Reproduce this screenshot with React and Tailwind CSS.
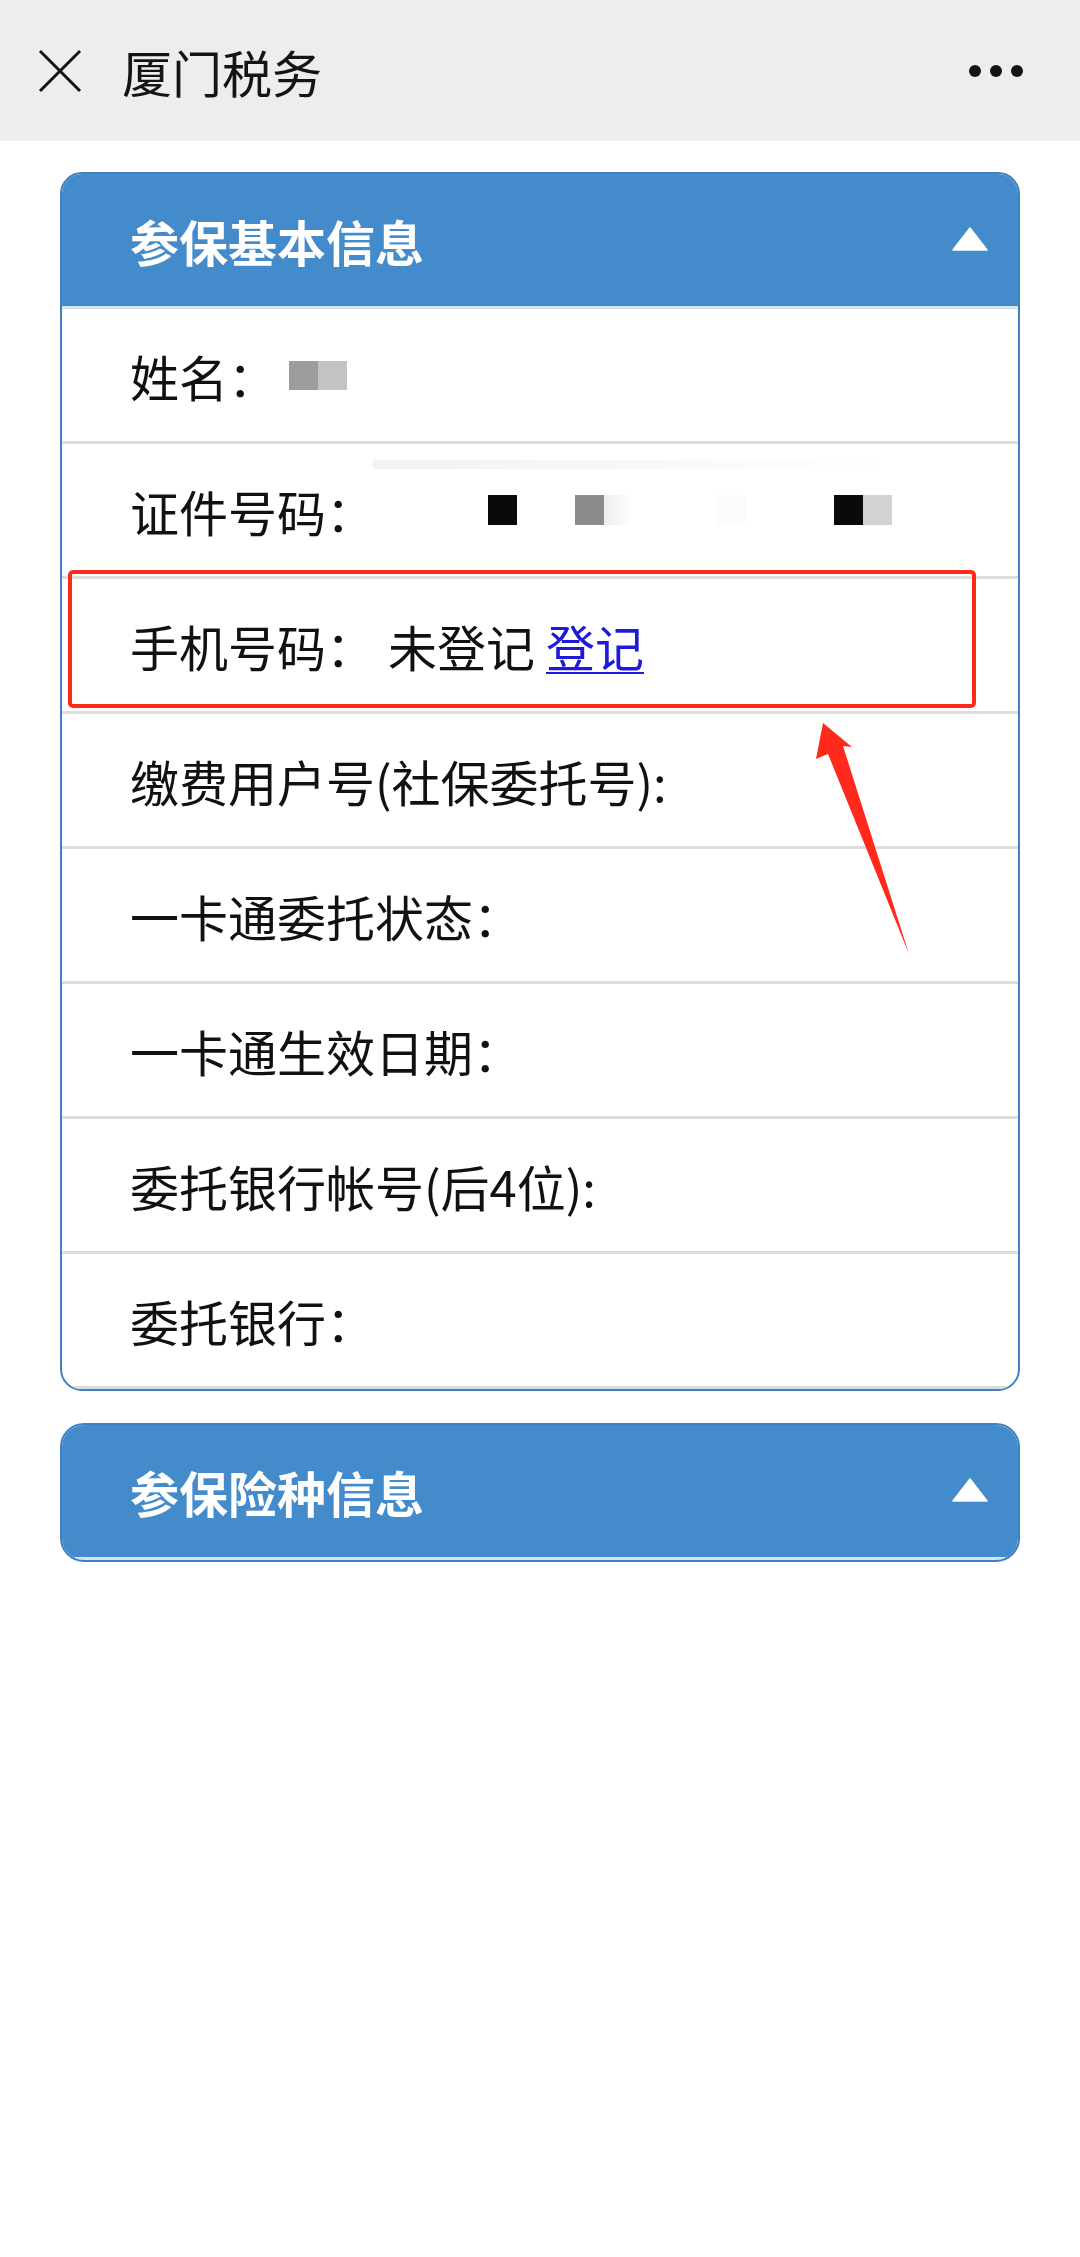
import { useState } from 'react';

const rows = [
    { label: '姓名：', kind: 'name' },
    { label: '证件号码：', kind: 'id' },
    { label: '手机号码：', kind: 'phone' },
    { label: '缴费用户号(社保委托号):' },
    { label: '一卡通委托状态：' },
    { label: '一卡通生效日期：' },
    { label: '委托银行帐号(后4位):' },
    { label: '委托银行：' },
];

function Triangle() {
    return (
        <svg width="36" height="24" viewBox="0 0 36 24" className="shrink-0">
            <polygon points="18,1 35,23 1,23" fill="#ffffff" stroke="#ffffff" strokeWidth="1.5" strokeLinejoin="round" />
        </svg>
    );
}

function RowValue({ kind }) {
    if (kind === 'name') {
        return (
            <div className="flex ml-[12px]">
                <span className="w-[29px] h-[29px] bg-[#9d9d9d]" />
                <span className="w-[29px] h-[29px] bg-[#c3c3c3]" />
            </div>
        );
    }
    if (kind === 'id') {
        return (
            <div className="flex ml-[113px]">
                <span className="w-[29px] h-[30px] bg-[#0a0a0a]" />
                <span className="w-[29px] h-[30px] bg-[#8c8c8c] ml-[58px]" />
                <span className="w-[29px] h-[30px] bg-gradient-to-r from-[#ededed] to-white" />
                <span className="w-[31px] h-[30px] bg-[#fcfcfc] ml-[82px]" />
                <span className="w-[29px] h-[30px] bg-[#0a0a0a] ml-[88px]" />
                <span className="w-[29px] h-[30px] bg-[#d2d2d2]" />
            </div>
        );
    }
    if (kind === 'phone') {
        return (
            <div className="flex ml-[13px]">
                <span>未登记</span>
                <a href="#" className="ml-[11px] text-[#1d1ad8] underline underline-offset-[5px] decoration-[2px]">登记</a>
            </div>
        );
    }
    return null;
}

export default function App() {
    const [openBase, setOpenBase] = useState(true);

    return (
        <div className="relative min-h-[2257px] bg-white text-[#111111] font-['Noto_Sans_CJK_SC','Noto_Sans',sans-serif]">
            {/* Top bar */}
            <div className="h-[141px] bg-[#ededed] flex items-center">
                <svg width="44" height="44" viewBox="0 0 44 44" className="ml-[38px] shrink-0">
                    <line x1="2" y1="2" x2="42" y2="42" stroke="#141414" strokeWidth="3" />
                    <line x1="42" y1="2" x2="2" y2="42" stroke="#141414" strokeWidth="3" />
                </svg>
                <div className="ml-[40px] text-[50px] leading-none text-[#141414]">厦门税务</div>
                <div className="ml-auto mr-[57px] flex gap-[9px]">
                    <span className="w-[12px] h-[12px] rounded-full bg-[#141414]" />
                    <span className="w-[12px] h-[12px] rounded-full bg-[#141414]" />
                    <span className="w-[12px] h-[12px] rounded-full bg-[#141414]" />
                </div>
            </div>

            {/* 参保基本信息 */}
            <div className="mx-[60px] mt-[31px] border-2 border-[#3f80c1] rounded-[22px] overflow-hidden">
                <div
                    className="h-[135px] bg-[#438bca] border-b-[3px] border-[#d7e4ee] flex items-center pl-[68px] pr-[30px] cursor-pointer"
                    onClick={() => setOpenBase(!openBase)}
                >
                    <div className="text-[49px] font-bold text-white leading-none">参保基本信息</div>
                    <div className="ml-auto mb-[3px]"><Triangle /></div>
                </div>
                {openBase && rows.map((row) => (
                    <div
                        key={row.label}
                        className="relative h-[135px] border-b-[3px] border-[#dcdcdc] flex items-center pl-[68px] text-[49px] leading-none"
                    >
                        {row.kind === 'id' && (
                            <div className="absolute left-[310px] top-[16px] w-[516px] h-[9px] rounded-l-full bg-gradient-to-r from-[#f2f2f2] via-[#f8f8f8] to-white" />
                        )}
                        <span>{row.label}</span>
                        <RowValue kind={row.kind} />
                    </div>
                ))}
            </div>

            {/* 参保险种信息 */}
            <div className="mx-[60px] mt-[32px] border-2 border-[#3f80c1] rounded-[24px] overflow-hidden">
                <div className="h-[135px] bg-[#438bca] border-b-[3px] border-[#d7e4ee] flex items-center pl-[68px] pr-[30px]">
                    <div className="text-[49px] font-bold text-white leading-none">参保险种信息</div>
                    <div className="ml-auto mb-[3px]"><Triangle /></div>
                </div>
            </div>

            {/* annotation: red box + arrow */}
            <div className="absolute left-[68px] top-[570px] w-[908px] h-[138px] border-4 border-[#ff2a1c] rounded-[5px] pointer-events-none" />
            <svg className="absolute left-[800px] top-[710px] pointer-events-none" width="120" height="260" viewBox="800 710 120 260">
                <polygon points="823,723 852,747 843,746 909,954 828,754 816,759" fill="#ff2a1c" />
            </svg>
        </div>
    );
}
